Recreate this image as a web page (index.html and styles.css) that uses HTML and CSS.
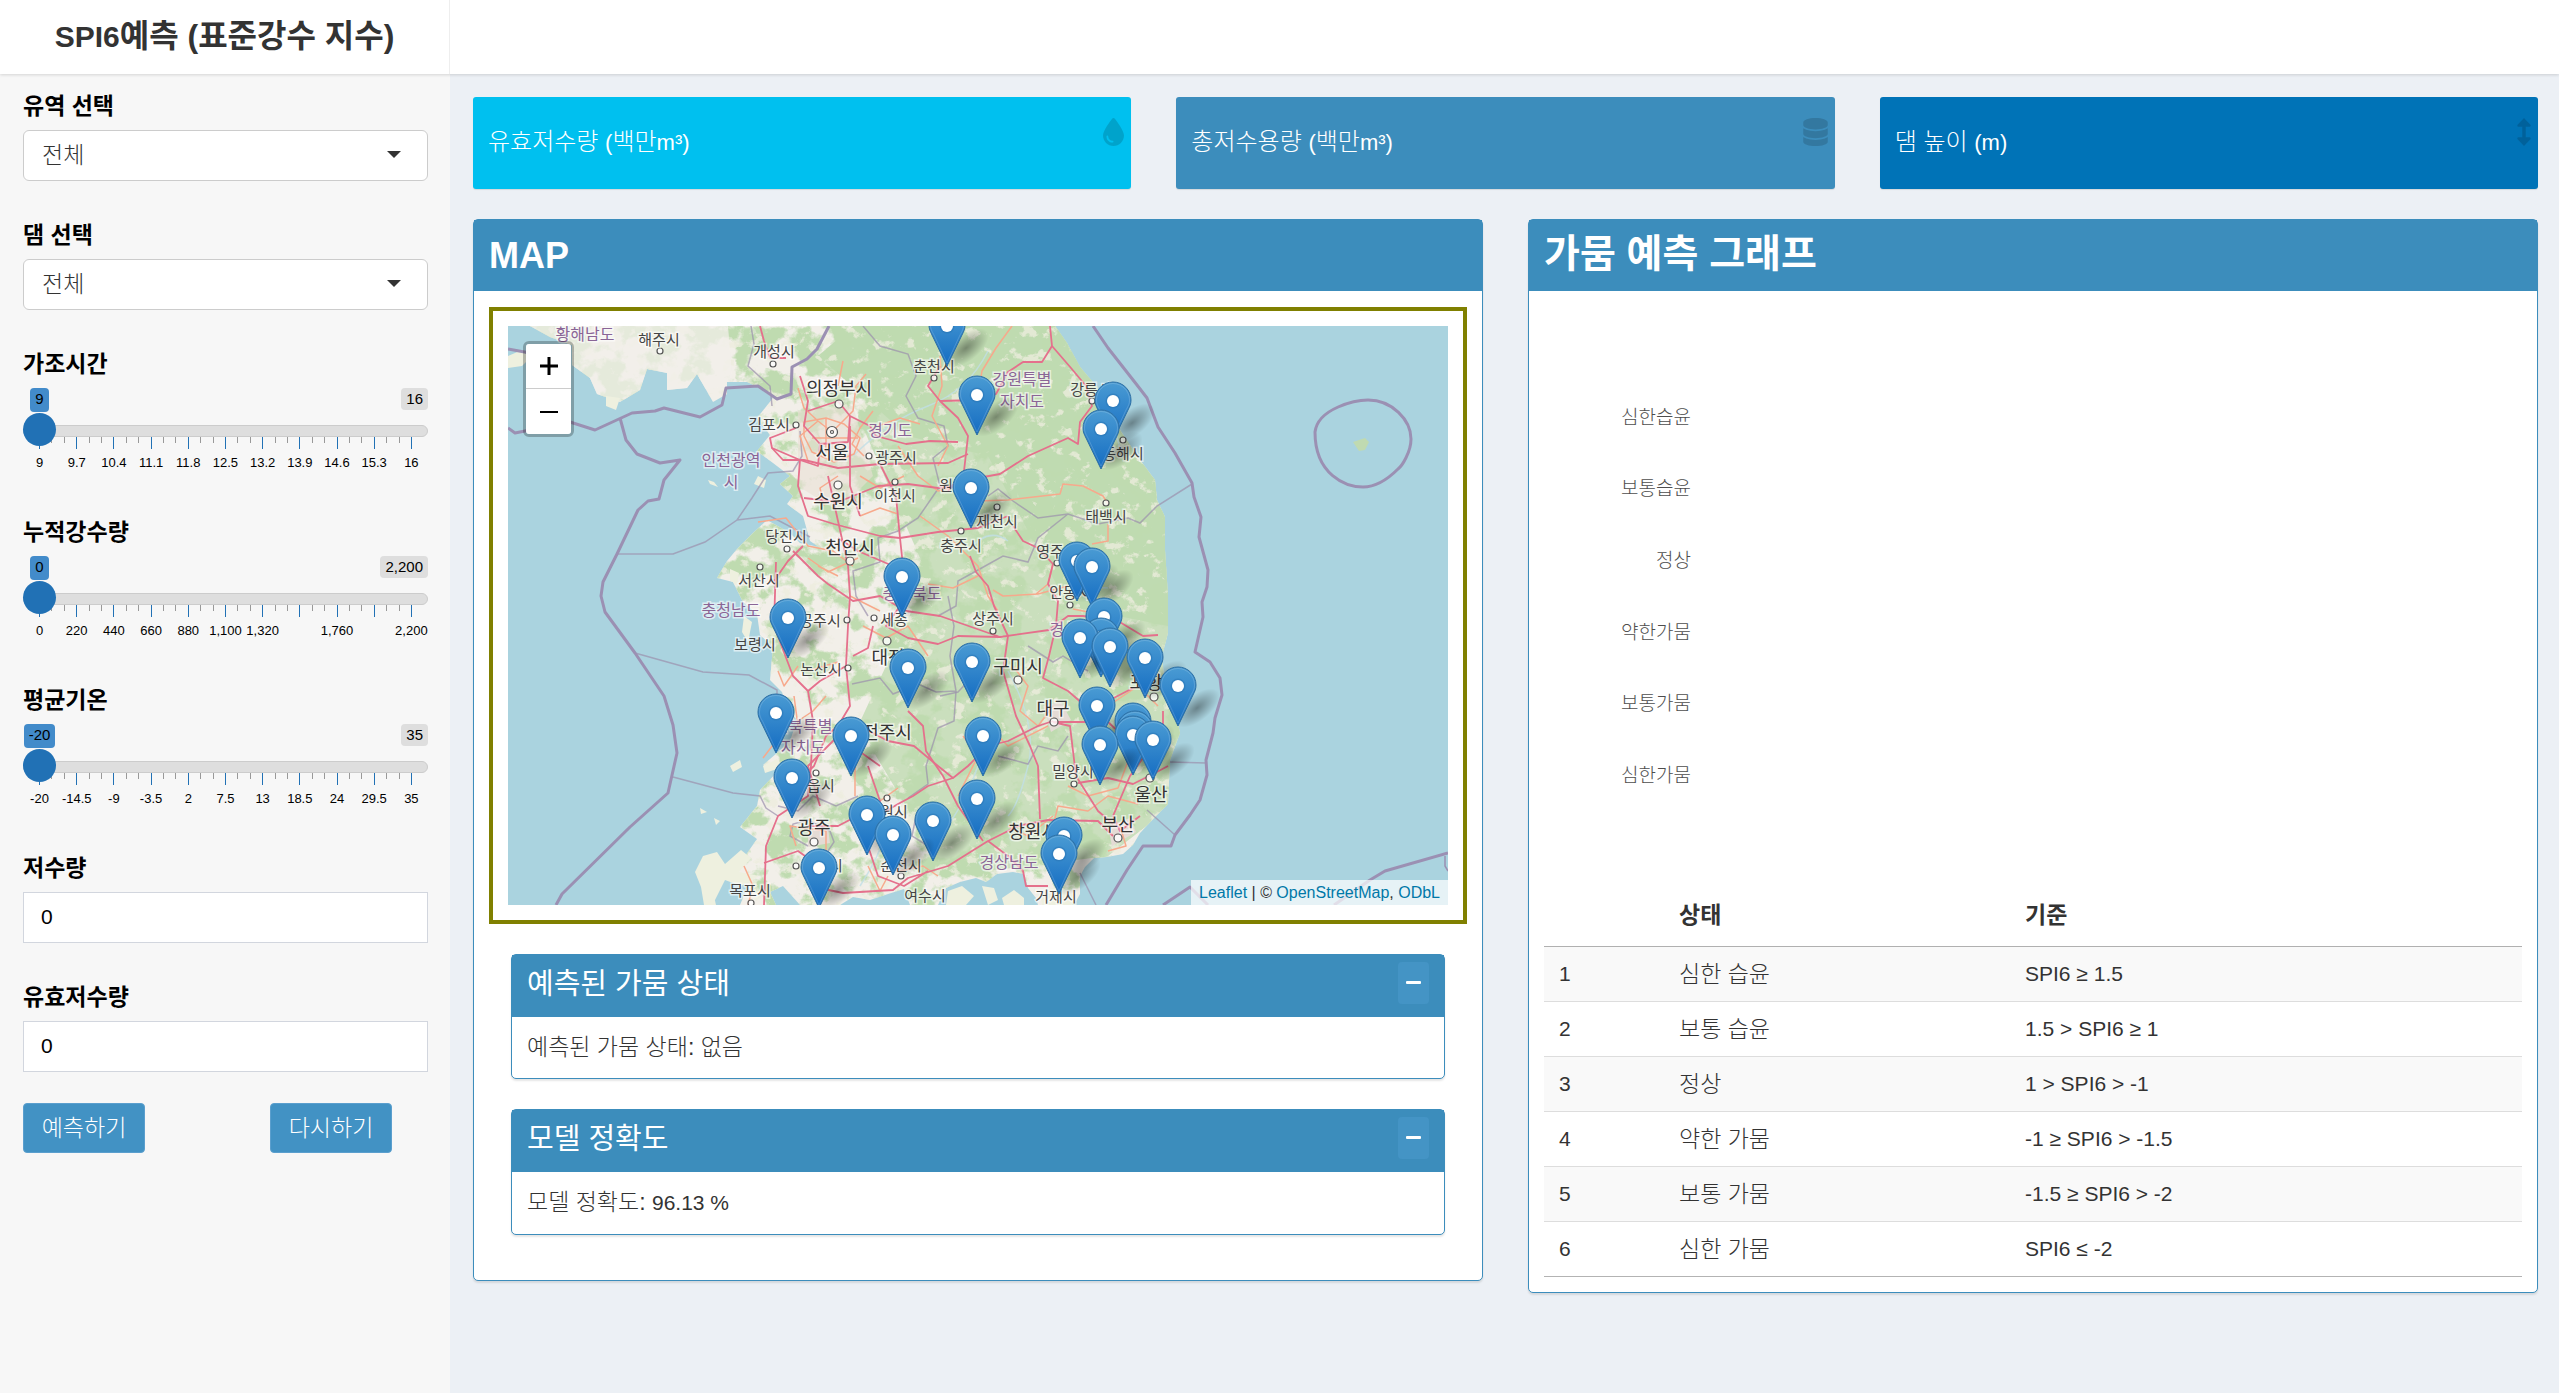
FILE: index.html
```html
<!DOCTYPE html>
<html lang="ko">
<head>
<meta charset="utf-8">
<meta name="viewport" content="width=device-width, initial-scale=1">
<title>SPI6예측 (표준강수 지수)</title>
<link rel="stylesheet" href="styles.css">
</head>
<body>
<header class="topbar">
  <h1 class="logo"><span class="latin">SPI6</span>예측 (표준강수 지수)</h1>
</header>
<div class="layout">
  <aside class="sidebar">
    <form class="controls">
      <div class="group">
        <label for="basin">유역 선택</label>
        <div class="select"><select id="basin"><option>전체</option></select></div>
      </div>
      <div class="group">
        <label for="dam">댐 선택</label>
        <div class="select"><select id="dam"><option>전체</option></select></div>
      </div>
      <div class="group">
        <label for="sunshine">가조시간</label>
        <div class="slider">
          <div class="chips"><span class="chip-slot"><output class="chip current">9</output></span><span class="chip">16</span></div>
          <input type="range" id="sunshine" min="9" max="16" step="0.1" value="9">
          <div class="ticks"></div>
          <div class="scale"><span>9</span><span>9.7</span><span>10.4</span><span>11.1</span><span>11.8</span><span>12.5</span><span>13.2</span><span>13.9</span><span>14.6</span><span>15.3</span><span>16</span></div>
        </div>
      </div>
      <div class="group">
        <label for="rain">누적강수량</label>
        <div class="slider">
          <div class="chips"><span class="chip-slot"><output class="chip current">0</output></span><span class="chip">2,200</span></div>
          <input type="range" id="rain" min="0" max="2200" value="0">
          <div class="ticks"></div>
          <div class="scale"><span>0</span><span>220</span><span>440</span><span>660</span><span>880</span><span>1,100</span><span>1,320</span><span></span><span>1,760</span><span></span><span>2,200</span></div>
        </div>
      </div>
      <div class="group">
        <label for="temp">평균기온</label>
        <div class="slider">
          <div class="chips"><span class="chip-slot"><output class="chip current">-20</output></span><span class="chip">35</span></div>
          <input type="range" id="temp" min="-20" max="35" value="-20">
          <div class="ticks"></div>
          <div class="scale"><span>-20</span><span>-14.5</span><span>-9</span><span>-3.5</span><span>2</span><span>7.5</span><span>13</span><span>18.5</span><span>24</span><span>29.5</span><span>35</span></div>
        </div>
      </div>
      <div class="group">
        <label for="storage">저수량</label>
        <input class="field" type="text" inputmode="decimal" id="storage" value="0">
      </div>
      <div class="group">
        <label for="effective">유효저수량</label>
        <input class="field" type="text" inputmode="decimal" id="effective" value="0">
      </div>
    </form>
    <div class="actions">
      <button type="button" class="btn">예측하기</button>
      <button type="button" class="btn">다시하기</button>
    </div>
  </aside>

  <main class="content">
    <div class="stats">
      <section class="stat aqua">
        <p>유효저수량 <span class="latin">(</span>백만<span class="latin">m³)</span></p>
        <svg class="stat-icon" viewBox="0 0 384 512" width="21" height="28" aria-hidden="true"><path fill-rule="evenodd" d="M192 512C86 512 0 426 0 320C0 228.800 130.200 57.700 166.600 11.700C172.600 4.200 181.500 0 191.100 0h1.800c9.600 0 18.500 4.200 24.500 11.700C253.800 57.700 384 228.800 384 320c0 106-86 192-192 192zM96 336c0-8.800-7.200-16-16-16s-16 7.200-16 16c0 61.900 50.100 112 112 112c8.800 0 16-7.200 16-16s-7.200-16-16-16c-44.200 0-80-35.800-80-80z"/></svg>
      </section>
      <section class="stat light">
        <p>총저수용량 <span class="latin">(</span>백만<span class="latin">m³)</span></p>
        <svg class="stat-icon" viewBox="0 0 448 512" width="25" height="28" aria-hidden="true"><path d="M448 80v48c0 44.200-100.300 80-224 80S0 172.200 0 128V80C0 35.800 100.300 0 224 0S448 35.800 448 80zM393.200 214.700c20.800-7.400 39.900-16.900 54.800-28.600V288c0 44.200-100.300 80-224 80S0 332.200 0 288V186.100c14.900 11.800 34 21.200 54.800 28.600C99.700 230.700 159.500 240 224 240s124.300-9.300 169.200-25.300zM0 346.100c14.900 11.800 34 21.200 54.800 28.600C99.700 390.700 159.500 400 224 400s124.300-9.300 169.200-25.300c20.800-7.400 39.900-16.900 54.800-28.600V432c0 44.200-100.300 80-224 80S0 476.200 0 432V346.100z"/></svg>
      </section>
      <section class="stat blue">
        <p>댐 높이 <span class="latin">(m)</span></p>
        <svg class="stat-icon" viewBox="0 0 256 512" width="14" height="28" aria-hidden="true"><path d="M128 0L250 130Q256 160 232 160H160V352H232Q256 352 250 382L128 512L6 382Q0 352 24 352H96V160H24Q0 160 6 130Z"/></svg>
      </section>
    </div>

    <div class="panels">
      <section class="box">
        <h2 class="box-head">MAP</h2>
        <div class="box-body">
          <div class="map-frame">
            <div class="map">
              <svg class="map-canvas" viewBox="0 0 940 579" preserveAspectRatio="xMidYMid slice" role="img" aria-label="댐 위치 지도">
                <defs>
                  <linearGradient id="pinFill" x1="0" y1="0" x2="0" y2="1"><stop offset="0" stop-color="#4a9bd3"/><stop offset="1" stop-color="#146cc2"/></linearGradient>
                  <radialGradient id="pinShade"><stop offset="0" stop-color="#000" stop-opacity=".38"/><stop offset="1" stop-color="#000" stop-opacity="0"/></radialGradient>
                  <filter id="woods" x="0" y="0" width="100%" height="100%" color-interpolation-filters="sRGB">
                    <feTurbulence type="fractalNoise" baseFrequency="0.035 0.04" numOctaves="5" seed="7"/>
                    <feColorMatrix values="0 0 0 0 0.75  0 0 0 0 0.86  0 0 0 0 0.69  0 9 0 0 -4.200"/>
                  </filter>
                  <filter id="clearings" x="0" y="0" width="100%" height="100%" color-interpolation-filters="sRGB">
                    <feTurbulence type="fractalNoise" baseFrequency="0.07 0.08" numOctaves="5" seed="21"/>
                    <feColorMatrix values="0 0 0 0 0.93  0 0 0 0 0.93  0 0 0 0 0.87  9 0 0 0 -5.400"/>
                  </filter>
                  <path id="coast" d="M22 0L42 11L64 19L64 39L82 52L89 68L112 76L132 64L139 43L159 47L159 64L179 62L189 48L205 76L219 68L219 56L239 56L252 62L265 72L249 92L262 109L249 125L265 137L282 150L272 158L285 170L279 178L295 190L302 215L311 221L292 217L282 207L259 194L245 207L229 223L219 235L209 252L225 256L235 276L249 288L252 309L265 321L262 354L274 366L279 382L289 394L282 415L269 427L255 439L262 443L272 443L252 464L249 480L232 501L249 513L235 533L225 545L239 562L232 579L268 579L262 566L275 560L292 579L332 579L345 571L362 574L380 568L396 563L402 579L430 579L438 562L452 556L468 552L478 556L489 548L505 546L516 548L520 562L528 572L530 579L566 579L572 568L572 550L577 541L586 532L599 531L615 528L625 519L632 507L648 490L660 478L662 434L672 407L665 374L657 360L654 330L660 307L660 270L657 224L657 191L649 174L647 154L632 134L614 107L599 84L589 61L572 41L559 17L547 0Z"/>
                  <clipPath id="landClip"><use href="#coast"/></clipPath>
                  <g id="pin">
                    <ellipse cx="19" cy="-19" rx="27" ry="13" transform="rotate(-38 19 -19)" fill="url(#pinShade)"/>
                    <path d="M0-1L-14.500-31C-17-36-18-38-18-42A18 18 0 0 1 18-42C18-38 17-36 14.500-31Z" fill="url(#pinFill)" stroke="#2e6fa3" stroke-width="1"/>
                    <path d="M0-4L-13-32C-16-37-16.500-39-16.500-42A16.500 16.500 0 0 1 16.500-42C16.500-39 16-37 13-32Z" fill="none" stroke="#fff" stroke-opacity=".16"/>
                    <circle cy="-41" r="7.500" fill="#2b78b8" fill-opacity=".6"/><circle cy="-41" r="6" fill="#fff"/>
                  </g>
                </defs>
                <rect width="940" height="579" fill="#aad3df"/>
                <use href="#coast" fill="#f2efe9"/>
                <g clip-path="url(#landClip)">
                  <path d="M400 0H560L700 300L690 460L600 530L440 550L350 400L420 250L350 90Z" fill="#bfdbb1" opacity=".8"/>
                  <path d="M345 0H560L670 190L660 300L560 280L480 130L400 110L310 30Z" fill="#bfdbb1"/>
                  <rect width="940" height="579" filter="url(#woods)"/>
                  <rect width="940" height="579" filter="url(#clearings)" opacity=".8"/>
                  <path d="M0 0H220L225 60L60 80L20 30Z" fill="#f2efe9" opacity=".75"/>
                  <path d="M290 85L345 80L365 150L330 185L290 160Z" fill="#e9dfd6" opacity=".6"/>
                  <path d="M535 380l18-4 10 18-20 12z M600 500l22-8 6 14-24 14z M300 505l20-4 2 16-22 4z" fill="#e4dbd5"/>
                </g>
                <g fill="#eef0df">
                  <path d="M0 30l14-6 8 8-8 8-14 2z M30 58l10 4-2 10-8-3z M98 70l14 2-4 12-10-4z"/>
                  <path d="M250 150l8 4-2 8-10-4z M200 154l6 2 4 5-8-3z M222 243l9 4-2 12-7-5z M236 290l8 6-4 20-6-10z"/>
                  <path d="M195 530l14-4 8 12 16-14 10 8-12 14 20 4-18 10-16-6-10 20-12-8-8-20z M192 555l12 6 4 18h-12z M222 440l10-6 2 7-9 5z M192 482l7 4-6 2z M206 492l6 3-4 4z M255 440l14-7 6 8-18 6z"/>
                  <path d="M440 565l14-5 12 10-8 9h-20z M474 560l12 2 4 12-10 5z M494 572l12-8 10 8v7h-20z M532 566l20-6 14 10-2 9h-30z"/>
                </g>
                <path d="M845 116l12-4 4 4-4 8-6 1z" fill="#c0dab1"/>
                <g fill="none" stroke="#c0dfe6" stroke-width="1.500" opacity=".8"><path d="M345 130Q380 95 420 80T480 25M352 560Q372 530 380 500M440 500Q460 470 470 440M560 270Q590 260 600 262M500 345Q530 400 520 440T500 490M460 225Q480 200 500 215M615 130L605 100"/></g>

                <g fill="none" stroke="#9b90ad" stroke-width="1.500" stroke-opacity=".7">
                  <path d="M109 228H165L197 216L229 194L244 172L260 147L285 145L294 130L292 105M229 194L262 190L302 211"/>
                  <path d="M127 327L195 346L241 349L269 364V370M165 451L225 467L252 470L258 482L270 490"/>
                  <path d="M684 158L649 180L632 197L620 192L590 198L560 188L530 192L505 175L490 163L480 170M560 188L530 212L520 236L495 230L470 244L450 255L448 280L430 290"/>
                  <path d="M639 484L667 509M662 436L698 437M572 547L588 579M490 0"/>
                  <path d="M355 0L372 20L400 28L408 50L398 70L410 92L436 100L440 120L425 132L432 160L410 192L390 205L370 212L372 236L345 245L348 270L360 290M243 0L246 18L240 40L262 60L264 80"/>
                  <path d="M344 358L372 352L385 368L410 358L428 366L448 365M448 365L446 395L430 402L418 440L420 458L400 472M448 365L442 330L446 300L440 270"/>
                  <path d="M270 480L290 485L305 470L328 480L350 470M300 520L282 510L285 498L300 494L322 505L326 516L318 528M408 490L404 510L420 520M520 320L545 336L555 330L580 345M490 430L520 438L530 420L550 425L560 410M432 370L450 366L465 350"/>
                </g>
                <g fill="none" stroke="#9b90b3" stroke-width="3" stroke-linejoin="round">
                  <path d="M0 23L22 27M0 102L7 107L62 96L87 104L124 87L147 85L156 82L192 91L214 79L218 62L250 60L269 73L283 68L284 41L299 33L309 23L321 0"/>
                  <path d="M112 92L118 114L129 128L152 137L172 134L156 154L151 173L140 175L130 184L109 228L95 256L93 270L97 286L127 327L156 370L165 399L169 427L160 467L122 501L54 568L48 579"/>
                  <path d="M585 0L600 22L629 59L639 72L650 101L667 127L684 157L686 171L693 191L691 211L700 244L699 261L694 276L695 291L687 326L702 336L712 352L714 369L707 392L705 407L698 434L699 449L692 474L682 489L667 509L663 520H635L619 544L598 579"/>
                  <path d="M807 106C810 82 848 74 860 74C884 74 903 94 903 113C903 126 894 140 890 143C880 153 868 161 855 161C838 161 807 149 807 106Z"/>
                  <path d="M940 527L877 545L862 554L826 579M655 579L682 561L700 579"/>
                  <path d="M937 530V540L940 545" stroke-width="1.500"/>
                </g>

                <g fill="none" stroke="#f7a98c" stroke-width="1.500" stroke-linejoin="round">
                  <path d="M290 62L296 82L310 95L324 106L345 85L348 60L358 48M335 35L330 60M310 95L292 110L300 135M365 85L352 102L344 118L356 130M504 0L488 22L474 45L469 75M432 30L434 60L424 90L440 120L430 140"/>
                  <path d="M390 120L410 150L430 165L452 160L470 175L500 174L552 168L555 158L575 160L595 170L600 178M600 198L600 215L584 218M485 264L495 270L530 268L560 260M545 237L540 258L528 268"/>
                  <path d="M250 196L278 192L300 220L325 225L345 240M300 232L320 246L350 232M310 240L330 250M342 270L372 285M355 300L378 312L400 300L420 330M290 395L305 385L318 370M286 370L290 400L310 402M300 345L330 336"/>
                  <path d="M347 420V470M372 475L390 462M455 410L470 430L450 470M480 400L500 420L540 400M505 340L520 360L512 385L530 400L545 380M545 500L550 480L580 485L600 470L630 478M612 500L618 520L600 525M500 500L520 510L545 490"/>
                  <path d="M236 540L245 560L240 579M360 540L372 565L380 550M288 520L282 500L318 505V525L300 530M268 415L255 432M270 345L276 360L290 340M392 545L415 540L430 550M600 380L630 360L650 380M565 283L600 290L608 310"/>
                  <path d="M412 190L440 210L470 240L480 270L490 285M420 258L445 262L470 250M560 460L580 470L610 462L622 430"/>
                  <path d="M296 96L318 92L336 98L352 112L346 128L326 136L304 126L296 110ZM318 92V126M304 112H350M370 100L392 92L412 98M352 150L372 162L396 150M330 150L312 162L316 180M352 190L372 182L390 188"/>
                </g>
                <g fill="none" stroke="#e5708c" stroke-width="1.800" stroke-linejoin="round">
                  <path d="M252 0L256 15L262 32L278 32M292 50L300 75L296 100L312 118L310 140L292 134L264 122L262 112L288 102M312 118L340 116L342 90L330 75L300 85M342 90L362 100L368 110L398 118L422 115L450 116"/>
                  <path d="M264 122L275 134L296 134L330 142L372 138L440 137L460 128M342 100L342 160L352 190M292 134L290 160L300 190L326 198L372 210L392 212L430 206L470 202L500 190M296 172L330 176L370 160L400 158L430 162L453 160L470 152L492 148L520 130L560 112L570 118L572 96L584 80L578 60L563 42L544 20L542 0"/>
                  <path d="M544 20L534 36L515 36L500 46L488 68L470 74L432 75L420 60L432 40M432 75L450 92L460 110L456 145L440 165M320 150L340 240L342 270L340 300L338 340L342 380L330 400L318 410L306 440L290 455"/>
                  <path d="M372 138L388 170L392 212L395 240L392 280L378 300L400 312L430 318L450 310L492 311L541 304L560 290L575 290L610 295L635 310L650 309M285 225L310 250L320 258L345 275L372 270L398 285L432 290L492 311M330 212L350 225L385 240"/>
                  <path d="M268 236L266 300L285 350L300 365L305 395L303 440L300 470L270 490L258 520L256 579M338 340L312 355L300 365M342 395L380 415L406 420L430 440L445 452L460 440L480 420L500 415L530 400L545 395M345 330L360 322L365 300M266 255L280 235L295 220"/>
                  <path d="M505 200L515 215L530 222L545 238L540 258L550 275L548 300L541 330L535 352L560 365L575 378L600 375L625 362M462 230L468 246L480 260L486 280L500 310L495 345L508 390L522 420L530 440L532 493M545 396L562 400L568 450L590 485L605 498M545 396H600L615 410L640 420L650 440"/>
                  <path d="M570 457L600 452L625 458L645 448L660 440M655 385V408L640 425L622 450L605 490L612 505L632 490M400 385L415 400L418 425L435 450L450 480L475 515M445 452L420 460L405 470L390 478L370 490L372 475L360 440M318 545L290 525L256 537M300 500L330 500L372 478"/>
                  <path d="M311 562L335 567L385 564L400 552L440 540L480 515L510 500L540 494L590 495L605 510M360 520L370 550L396 560L420 545M480 515L500 530L515 545L518 560L540 560M312 480L300 440L330 410L372 440"/>
                </g>

                <g class="dots">
                  <circle cx="152" cy="25" r="3"/><circle cx="265" cy="38" r="3"/><circle cx="426" cy="52" r="3"/><circle cx="331" cy="78" r="4"/><circle cx="288" cy="99" r="3"/><circle cx="324" cy="106" r="5.500"/><circle cx="324" cy="106" r="1.500"/><circle cx="361" cy="130" r="3"/><circle cx="330" cy="159" r="4"/><circle cx="387" cy="156" r="3"/><circle cx="279" cy="223" r="3"/><circle cx="342" cy="235" r="4"/><circle cx="252" cy="241" r="3"/><circle cx="339" cy="294" r="3"/><circle cx="366" cy="292" r="3"/><circle cx="379" cy="315" r="4"/><circle cx="340" cy="342" r="3"/><circle cx="308" cy="447" r="3"/><circle cx="379" cy="472" r="3"/><circle cx="306" cy="516" r="4"/><circle cx="288" cy="540" r="3"/><circle cx="393" cy="550" r="3"/><circle cx="243" cy="577" r="3"/><circle cx="584" cy="75" r="3"/><circle cx="615" cy="114" r="3"/><circle cx="489" cy="181" r="3"/><circle cx="598" cy="177" r="3"/><circle cx="453" cy="205" r="3"/><circle cx="549" cy="237" r="3"/><circle cx="562" cy="279" r="3"/><circle cx="485" cy="305" r="3"/><circle cx="510" cy="354" r="4"/><circle cx="546" cy="396" r="4"/><circle cx="646" cy="371" r="4"/><circle cx="642" cy="452" r="4"/><circle cx="566" cy="458" r="3"/><circle cx="610" cy="512" r="4"/>
                </g>
                <g class="place region">
                  <text x="77" y="14">황해남도</text><text x="382" y="110">경기도</text><text x="223" y="140">인천광역</text><text x="223" y="162">시</text><text x="223" y="290">충청남도</text><text x="404" y="273">충청북도</text><text x="295" y="406">전북특별</text><text x="295" y="427">자치도</text><text x="514" y="59">강원특별</text><text x="514" y="81">자치도</text><text x="571" y="309">경상북도</text><text x="501" y="542">경상남도</text>
                </g>
                <g class="place town">
                  <text x="151" y="19">해주시</text><text x="266" y="31">개성시</text><text x="426" y="46">춘천시</text><text x="261" y="104">김포시</text><text x="388" y="137">광주시</text><text x="387" y="175">이천시</text><text x="452" y="165">원주시</text><text x="278" y="216">당진시</text><text x="251" y="260">서산시</text><text x="247" y="324">보령시</text><text x="312" y="300">공주시</text><text x="386" y="299">세종</text><text x="313" y="349">논산시</text><text x="306" y="465">정읍시</text><text x="379" y="491">남원시</text><text x="314" y="545">나주시</text><text x="393" y="545">순천시</text><text x="242" y="570">목포시</text><text x="417" y="575">여수시</text><text x="583" y="69">강릉시</text><text x="615" y="133">동해시</text><text x="489" y="201">제천시</text><text x="598" y="196">태백시</text><text x="453" y="225">충주시</text><text x="549" y="231">영주시</text><text x="562" y="272">안동시</text><text x="485" y="298">상주시</text><text x="565" y="451">밀양시</text><text x="548" y="576">거제시</text>
                </g>
                <g class="place city">
                  <text x="331" y="69">의정부시</text><text x="324" y="133">서울</text><text x="330" y="182">수원시</text><text x="342" y="228">천안시</text><text x="380" y="338">대전</text><text x="379" y="413">전주시</text><text x="306" y="508">광주</text><text x="510" y="347">구미시</text><text x="545" y="389">대구</text><text x="638" y="363">포항</text><text x="643" y="475">울산</text><text x="610" y="505">부산</text><text x="525" y="512">창원시</text>
                </g>
                <g>
                  <use href="#pin" x="439" y="41"/><use href="#pin" x="469" y="110"/><use href="#pin" x="605" y="116"/><use href="#pin" x="593" y="144"/><use href="#pin" x="463" y="203"/><use href="#pin" x="569" y="276"/><use href="#pin" x="584" y="282"/><use href="#pin" x="394" y="292"/><use href="#pin" x="596" y="332"/><use href="#pin" x="280" y="333"/><use href="#pin" x="593" y="352"/><use href="#pin" x="572" y="353"/><use href="#pin" x="602" y="362"/><use href="#pin" x="637" y="373"/><use href="#pin" x="464" y="377"/><use href="#pin" x="400" y="383"/><use href="#pin" x="670" y="401"/><use href="#pin" x="589" y="421"/><use href="#pin" x="268" y="428"/><use href="#pin" x="625" y="437"/><use href="#pin" x="627" y="445"/><use href="#pin" x="625" y="450"/><use href="#pin" x="343" y="451"/><use href="#pin" x="475" y="451"/><use href="#pin" x="645" y="455"/><use href="#pin" x="592" y="460"/><use href="#pin" x="284" y="493"/><use href="#pin" x="469" y="514"/><use href="#pin" x="359" y="530"/><use href="#pin" x="425" y="536"/><use href="#pin" x="385" y="550"/><use href="#pin" x="556" y="551"/><use href="#pin" x="551" y="569"/><use href="#pin" x="311" y="583"/>
                </g>
              </svg>
              <div class="map-zoom">
                <button type="button" aria-label="확대"><svg viewBox="0 0 18 18" width="18" height="18"><path d="M0 9H18M9 0V18" stroke="#000" stroke-width="3"/></svg></button>
                <button type="button" aria-label="축소"><svg viewBox="0 0 18 18" width="18" height="18"><path d="M0 9H18" stroke="#000" stroke-width="2"/></svg></button>
              </div>
              <div class="map-credit"><a href="#">Leaflet</a> | © <a href="#">OpenStreetMap</a>, <a href="#">ODbL</a></div>
            </div>
          </div>
          <div class="cards">
            <section class="box">
              <div class="card-head"><h3>예측된 가뭄 상태</h3><button type="button" class="collapse" aria-label="접기"><span class="minus"></span></button></div>
              <p class="card-text">예측된 가뭄 상태: 없음</p>
            </section>
            <section class="box">
              <div class="card-head"><h3>모델 정확도</h3><button type="button" class="collapse" aria-label="접기"><span class="minus"></span></button></div>
              <p class="card-text">모델 정확도: <span class="latin">96.13 %</span></p>
            </section>
          </div>
        </div>
      </section>

      <section class="box">
        <h2 class="box-head ko">가뭄 예측 그래프</h2>
        <div class="box-body">
          <div class="chart">
            <ul class="axis"><li>심한습윤</li><li>보통습윤</li><li>정상</li><li>약한가뭄</li><li>보통가뭄</li><li>심한가뭄</li></ul>
          </div>
          <table class="criteria">
            <thead><tr><th></th><th>상태</th><th>기준</th></tr></thead>
            <tbody>
              <tr><td>1</td><td>심한 습윤</td><td>SPI6 ≥ 1.5</td></tr>
              <tr><td>2</td><td>보통 습윤</td><td>1.5 &gt; SPI6 ≥ 1</td></tr>
              <tr><td>3</td><td>정상</td><td>1 &gt; SPI6 &gt; -1</td></tr>
              <tr><td>4</td><td>약한 가뭄</td><td>-1 ≥ SPI6 &gt; -1.5</td></tr>
              <tr><td>5</td><td>보통 가뭄</td><td>-1.5 ≥ SPI6 &gt; -2</td></tr>
              <tr><td>6</td><td>심한 가뭄</td><td>SPI6 ≤ -2</td></tr>
            </tbody>
          </table>
        </div>
      </section>
    </div>
  </main>
</div>
</body>
</html>
```
FILE: styles.css
```css
* { box-sizing: border-box; }

body {
  margin: 0;
  min-height: 100vh;
  display: flex;
  flex-direction: column;
  background: #ecf0f5;
  color: #333;
  font: 300 21px/30px "Liberation Sans", "Noto Sans CJK KR", sans-serif;
}

h1, h2, h3, p, ul { margin: 0; padding: 0; }
button, input, select { font-family: inherit; font-weight: inherit; }

/* Header */
.topbar {
  position: relative;
  display: flex;
  height: 74px;
  background: #fff;
  box-shadow: 0 1px 3px rgba(0, 0, 0, .14);
}
.logo {
  width: 450px;
  border-right: 1px solid #eee;
  text-align: center;
  font-size: 32px;
  line-height: 72px;
}
.logo .latin { font-size: 30px; }

.layout { flex: 1; display: grid; grid-template-columns: 450px minmax(0, 1fr); }

/* Sidebar */
.sidebar { padding: 17px 22px 23px 23px; background: #f7f7f7; color: #000; }
.controls { display: flex; flex-direction: column; gap: 39px; }
.group { display: flex; flex-direction: column; gap: 9px; }
.group label { font-size: 23px; font-weight: bold; line-height: 30px; }

.select { position: relative; }
.select select {
  display: block;
  width: 100%;
  height: 51px;
  padding: 0 40px 2px 18px;
  appearance: none;
  border: 1px solid #ccc;
  border-radius: 6px;
  background: #fff;
  color: #333;
  font-size: 23px;
}
.select::after {
  content: "";
  position: absolute;
  right: 27px;
  top: 21px;
  border: 7px solid transparent;
  border-top-color: #333;
  border-bottom: 0;
  pointer-events: none;
}

.field {
  width: 100%;
  height: 51px;
  padding: 0 17px 2px;
  border: 1px solid #d2d6de;
  background: #fff;
  color: #000;
  font-size: 21px;
}

.slider { height: 90px; }
.chips { display: flex; justify-content: space-between; height: 26px; }
.chip-slot { width: 33px; display: flex; justify-content: center; }
.chip {
  height: 22px;
  padding: 0 5px;
  border-radius: 4px;
  background: #dedede;
  font-size: 15px;
  line-height: 22px;
}
.chip.current { height: 24px; background: #428bca; }
.slider input {
  position: relative;
  z-index: 1;
  display: block;
  width: 100%;
  height: 33px;
  margin: 0;
  appearance: none;
  background: none;
}
.slider input::-webkit-slider-runnable-track {
  height: 12px;
  border: 1px solid #ccc;
  border-radius: 8px;
  background: #dedede;
}
.slider input::-webkit-slider-thumb {
  appearance: none;
  width: 33px;
  height: 33px;
  margin: -13px -1px 0;
  border-radius: 50%;
  background: #2171b5;
}
.slider input::-moz-range-track { height: 12px; border: 1px solid #ccc; border-radius: 8px; background: #dedede; }
.slider input::-moz-range-thumb { width: 33px; height: 33px; border: 0; border-radius: 50%; background: #2171b5; }
.ticks {
  height: 12px;
  margin: -10px 16px 0;
  background:
    repeating-linear-gradient(90deg, #2171b5 0 1px, transparent 1px calc((100% - 1px) / 10)) 0 0 / 100% 12px no-repeat,
    repeating-linear-gradient(90deg, #999 0 1px, transparent 1px calc((100% - 1px) / 30)) 0 0 / 100% 6px no-repeat;
}
.scale { display: flex; justify-content: space-between; margin: 4px 16px 0; font-size: 13px; line-height: 20px; }
.scale span { width: 1px; display: flex; justify-content: center; white-space: nowrap; }

.actions { display: flex; gap: 125px; margin-top: 31px; }
.btn {
  width: 122px;
  height: 50px;
  padding: 0 0 4px;
  border: 1px solid #5b9fce;
  border-radius: 4px;
  background: #4292c4;
  color: #fff;
  font-size: 23px;
}

/* Content */
.content { padding: 23px 21px 23px 23px; }
.stats { display: grid; grid-template-columns: repeat(3, 1fr); gap: 45px; margin-bottom: 30px; }
.stat {
  display: flex;
  justify-content: space-between;
  height: 92px;
  padding: 21px 7px 0 15px;
  border-radius: 3px;
  box-shadow: 0 1px 1px rgba(0, 0, 0, .1);
  color: #fff;
  font-size: 24px;
  line-height: 48px;
}
.stat .latin { font-size: 22px; }
.stat-icon { fill: rgba(0, 0, 0, .15); }
.aqua { background: #00c0ef; }
.light { background: #3c8dbc; }
.blue { background: #0073b7; }

.panels { display: grid; grid-template-columns: repeat(2, minmax(0, 1fr)); gap: 45px; align-items: start; }
.box {
  border: 1px solid #3c8dbc;
  border-radius: 5px;
  background: #fff;
  box-shadow: 0 2px 2px rgba(0, 0, 0, .1);
}
.box-head { height: 71px; padding-left: 15px; background: #3c8dbc; color: #fff; font-size: 36px; line-height: 72px; }
.box-head.ko { font-size: 39px; line-height: 68px; }
.box-body { padding: 15px; }

/* Map */
.map-frame { margin-top: 1px; padding: 15px; border: 4px solid #808000; }
.map { position: relative; height: 579px; overflow: hidden; }
.map-canvas { display: block; width: 100%; height: 100%; }
.dots circle { fill: #fff; fill-opacity: .8; stroke: #555; stroke-width: 1.2px; }
.place {
  text-anchor: middle;
  paint-order: stroke;
  stroke: rgba(255, 255, 255, .6);
  stroke-width: 3px;
  font-family: "Noto Sans CJK KR", sans-serif;
  font-weight: 400;
}
.region { fill: #8a6596; font-size: 16px; }
.town { fill: #444; font-size: 15px; }
.city { fill: #333; font-size: 18px; }
.map-zoom {
  position: absolute;
  left: 15px;
  top: 15px;
  border: 3px solid rgba(0, 0, 0, .25);
  border-radius: 6px;
  background-clip: padding-box;
}
.map-zoom button {
  display: grid;
  place-items: center;
  width: 45px;
  height: 45px;
  padding: 0;
  border: 0;
  background: #fff;
}
.map-zoom button:first-child { border-bottom: 1px solid #ccc; border-radius: 3px 3px 0 0; }
.map-zoom button:last-child { border-radius: 0 0 3px 3px; }
.map-credit {
  position: absolute;
  right: 0;
  bottom: 0;
  padding: 0 8px;
  background: rgba(255, 255, 255, .7);
  font-size: 16px;
  line-height: 25px;
}
.map-credit a { color: #0078a8; text-decoration: none; }

.cards { display: flex; flex-direction: column; gap: 30px; margin: 30px 22px; }
.card-head {
  display: flex;
  justify-content: space-between;
  height: 62px;
  padding: 7px 15px 0;
  background: #3c8dbc;
  color: #fff;
}
.card-head h3 { font-size: 29px; font-weight: 400; line-height: 44px; }
.collapse { display: grid; place-items: center; width: 31px; height: 42px; padding: 0; border: 0; border-radius: 4px; background: #4494c5; }
.minus { width: 15px; height: 3px; margin-bottom: 2px; border-radius: 1px; background: #fff; }
.card-text { padding: 15px 15px 16px; font-size: 23px; line-height: 30px; }
.card-text .latin { font-size: 21px; }

/* Chart */
.chart { height: 585px; padding-top: 76px; }
.axis {
  display: grid;
  grid-auto-rows: 1fr;
  align-items: center;
  width: 147px;
  height: 430px;
  list-style: none;
  text-align: right;
  color: #4d4d4d;
  font-size: 19px;
}

/* Criteria table */
.criteria { width: 100%; table-layout: fixed; border-spacing: 0; border-bottom: 1px solid #b3b3b3; }
.criteria th, .criteria td { height: 55px; padding: 0 15px; text-align: left; }
.criteria th { height: 56px; border-bottom: 1px solid #b0b0b0; padding-bottom: 7px; font-size: 23px; }
.criteria td { border-bottom: 1px solid #ddd; }
.criteria tr:last-child td { height: 54px; border-bottom: 0; }
.criteria tbody tr:nth-child(odd) { background: #f9f9f9; }
.criteria th:first-child { width: 120px; }
.criteria th:nth-child(2) { width: 346px; }
.criteria td:nth-child(2) { font-size: 23px; }
```
